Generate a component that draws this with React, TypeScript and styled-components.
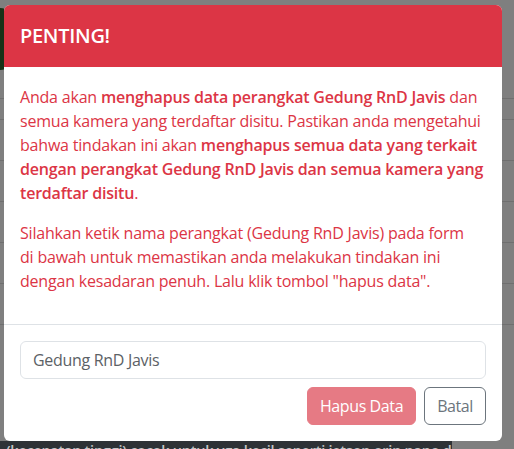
import React from "react";
import styled, { createGlobalStyle } from "styled-components";

const Global = createGlobalStyle`
  html, body { margin: 0; padding: 0; }
  body {
    width: 514px;
    height: 449px;
    overflow: hidden;
    background: #7f7f7f;
    font-family: "Open Sans", "Noto Sans", sans-serif;
  }
`;

const Page = styled.div`
  position: relative;
  width: 514px;
  height: 449px;
  overflow: hidden;
  background: #7f7f7f;
`;

const Behind = styled.div`
  display: flex;
  flex-direction: column;
  height: 100%;
`;

const TopArea = styled.div`
  flex: 1;
  display: flex;
  flex-direction: column;
  padding-top: 8px;
`;

const GreenTab = styled.div`
  width: 14px;
  height: 62px;
  background: #173217;
  border-radius: 0 30px 30px 0;
`;

const Rows = styled.div`
  flex: 1;
  display: flex;
  flex-direction: column;
`;

const Row = styled.div<{ $h: number }>`
  height: ${(p) => p.$h}px;
  border-bottom: 1px solid #6f6f6f;
`;

const Caption = styled.div`
  height: 8px;
  width: 452px;
  background: #2e3236;
  color: #c4c6c8;
  font-family: "Open Sans", sans-serif;
  font-size: 14.5px;
  font-weight: 600;
  line-height: 16px;
  letter-spacing: -0.25px;
  white-space: nowrap;
  overflow: hidden;
  padding: 2px 0 0 6px;
  box-sizing: border-box;
`;

const Overlay = styled.div`
  position: absolute;
  inset: 0;
  padding: 5px 12px 0 4px;
`;

const Modal = styled.div`
  width: 498px;
  height: 436px;
  background: #fff;
  border-radius: 6px;
  overflow: hidden;
  display: flex;
  flex-direction: column;
`;

const Header = styled.div`
  height: 62px;
  background: #dc3545;
  display: flex;
  align-items: center;
  padding: 0 16px;
  box-sizing: border-box;
`;

const Title = styled.h5`
  margin: 0;
  color: #fff;
  font-size: 20px;
  font-weight: 600;
  line-height: 24px;
  letter-spacing: -0.3px;
`;

const Body = styled.div`
  flex: 1;
  padding: 18px 16px 0;
  color: #dc3545;
  font-size: 16px;
  line-height: 24px;
  letter-spacing: -0.2px;
  white-space: nowrap;
`;

const Para = styled.p`
  margin: 0 0 16px;
  b { font-weight: 600; letter-spacing: -0.2px; }
`;

const Footer = styled.div`
  border-top: 1px solid #dee2e6;
  padding: 16px;
  display: flex;
  flex-direction: column;
  gap: 8px;
`;

const Input = styled.input`
  height: 38px;
  box-sizing: border-box;
  width: 100%;
  border: 1px solid #dee2e6;
  border-radius: 6px;
  padding: 6px 12px;
  font-family: inherit;
  font-size: 16px;
  color: #5c6166;
  letter-spacing: -0.3px;
  outline: none;
`;

const Actions = styled.div`
  display: flex;
  justify-content: flex-end;
  gap: 8px;
`;

const Button = styled.button<{ $variant: "danger" | "secondary" }>`
  height: 38px;
  box-sizing: border-box;
  border-radius: 6px;
  font-family: inherit;
  font-size: 16px;
  letter-spacing: -0.4px;
  padding: 0 12px;
  border: 1px solid ${(p) => (p.$variant === "danger" ? "#e67a84" : "#6c757d")};
  background: ${(p) => (p.$variant === "danger" ? "#e67a84" : "#fff")};
  color: ${(p) => (p.$variant === "danger" ? "#fff" : "#6c757d")};
`;

export default function App() {
  return (
    <>
      <Global />
      <Page>
        <Behind>
          <TopArea>
            <GreenTab />
            <Rows>
              <Row $h={28} />
              <Row $h={20} />
              <Row $h={40} />
              <Row $h={40} />
              <Row $h={40} />
              <Row $h={40} />
              <Row $h={40} />
            </Rows>
          </TopArea>
          <Caption>(kecepatan tinggi) cocok untuk vga kecil seperti jetson orin nano dan orin NX</Caption>
        </Behind>
        <Overlay>
          <Modal>
            <Header>
              <Title>PENTING!</Title>
            </Header>
            <Body>
              <Para>
                Anda akan <b>menghapus data perangkat Gedung RnD Javis</b> dan
                <br />
                semua kamera yang terdaftar disitu. Pastikan anda mengetahui
                <br />
                bahwa tindakan ini akan <b>menghapus semua data yang terkait</b>
                <br />
                <b>dengan perangkat Gedung RnD Javis dan semua kamera yang</b>
                <br />
                <b>terdaftar disitu</b>.
              </Para>
              <Para>
                Silahkan ketik nama perangkat (Gedung RnD Javis) pada form
                <br />
                di bawah untuk memastikan anda melakukan tindakan ini
                <br />
                dengan kesadaran penuh. Lalu klik tombol "hapus data".
              </Para>
            </Body>
            <Footer>
              <Input defaultValue="Gedung RnD Javis" readOnly />
              <Actions>
                <Button $variant="danger" disabled>Hapus Data</Button>
                <Button $variant="secondary">Batal</Button>
              </Actions>
            </Footer>
          </Modal>
        </Overlay>
      </Page>
    </>
  );
}
